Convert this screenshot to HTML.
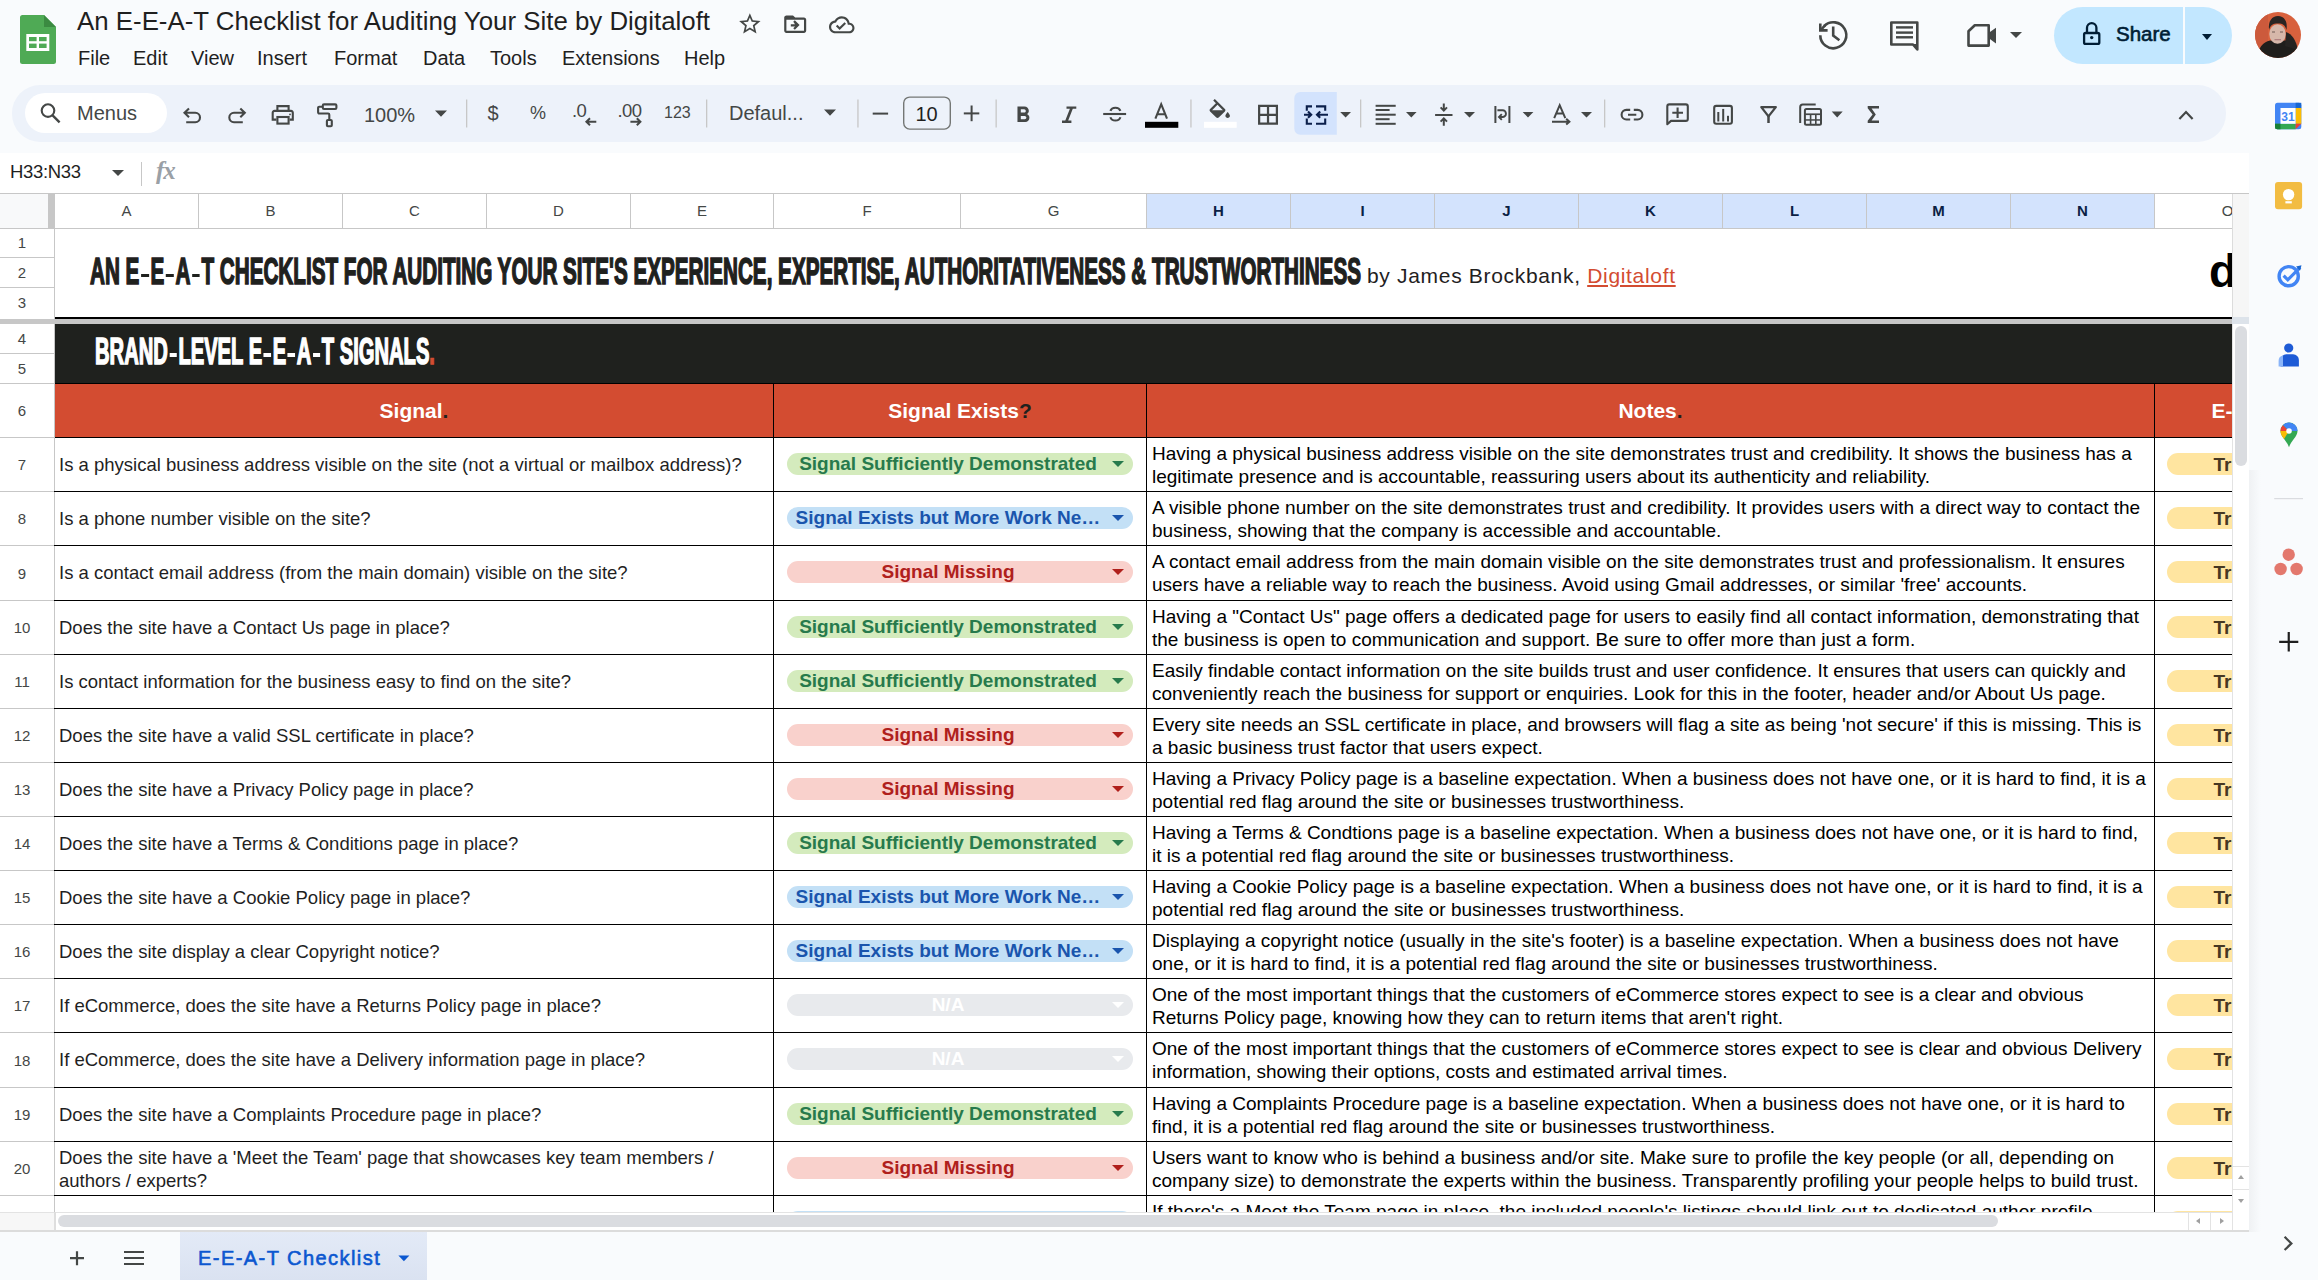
<!DOCTYPE html>
<html><head><meta charset="utf-8">
<style>
*{box-sizing:border-box;margin:0;padding:0}
html,body{width:2318px;height:1280px;overflow:hidden;background:#f9fbfd;font-family:"Liberation Sans",sans-serif;color:#1f1f1f}
.abs{position:absolute}
svg{position:absolute;overflow:visible}
#title{position:absolute;left:77px;top:7px;font-size:25.85px;color:#1f1f1f;white-space:nowrap}
.menu{position:absolute;top:47px;font-size:20px;color:#1f1f1f;white-space:nowrap}
#toolbar{position:absolute;left:12px;top:85px;width:2214px;height:57px;border-radius:28px;background:#edf2fa}
#search{position:absolute;left:25px;top:93px;width:142px;height:40px;border-radius:20px;background:#fff}
.tbt{position:absolute;white-space:nowrap;color:#444746}
.sep{position:absolute;top:100px;width:1px;height:27px;background:#c7c7c7}
.dd{position:absolute;width:0;height:0;border-left:6px solid transparent;border-right:6px solid transparent;border-top:6px solid #444746}
#fbar{position:absolute;left:0;top:153px;width:2249px;height:40px;background:#fff}
#grid{position:absolute;left:0;top:193px;width:2249px;height:1039px;background:#fff;overflow:hidden}
.ch{position:absolute;top:194px;height:34px;line-height:34px;text-align:center;font-size:15px;color:#444746}
.ch.sel{color:#0b1f44;font-weight:bold}
.rn{position:absolute;left:0;width:44px;text-align:center;font-size:15px;color:#444746;display:flex;align-items:center;justify-content:center}
.q{position:absolute;left:59px;font-size:18.5px;line-height:22.6px;color:#1f1f1f;white-space:nowrap}
.nt{position:absolute;left:1152px;font-size:19px;line-height:22.6px;color:#000;white-space:nowrap}
.pill{position:absolute;left:787px;width:346px;height:22px;border-radius:11px;font-weight:bold;font-size:19px;line-height:22px;text-align:center;white-space:nowrap}
.pill span{position:absolute;left:0;right:24px;top:0;text-align:center}
.pill i{position:absolute;right:9px;top:8px;width:0;height:0;border-left:6.5px solid transparent;border-right:6.5px solid transparent;border-top:6px solid}
.tp{position:absolute;left:2167px;width:120px;height:22px;border-radius:11px;background:#ffe5a0;color:#473822;font-weight:bold;font-size:19px;line-height:22px}
.tp span{position:absolute;left:46.5px;top:0.5px}
.hl{position:absolute;left:54px;width:2180px;height:1px;background:#000}
.vl{position:absolute;width:1px;background:#000}
.gl{position:absolute;background:#c7c7c7}
.hy{display:inline-block;width:13.6px;height:3.5px;background:currentColor;margin:0 2.9px;vertical-align:7px}
</style></head><body>

<!-- ===== HEADER ===== -->
<svg style="left:20px;top:15px" width="36" height="49" viewBox="0 0 36 49">
  <path d="M2.5 0 H24 L36 12 V46.5 a2.5 2.5 0 0 1 -2.5 2.5 H2.5 a2.5 2.5 0 0 1 -2.5 -2.5 V2.5 a2.5 2.5 0 0 1 2.5 -2.5z" fill="#4faa55"/>
  <path d="M24 0 L36 12 H24z" fill="#3b8a41"/>
  <rect x="6.3" y="19" width="23" height="17" fill="#fff"/>
  <rect x="9" y="22" width="7.6" height="4.2" fill="#4faa55"/><rect x="19" y="22" width="7.6" height="4.2" fill="#4faa55"/>
  <rect x="9" y="28.6" width="7.6" height="4.4" fill="#4faa55"/><rect x="19" y="28.6" width="7.6" height="4.4" fill="#4faa55"/>
</svg>
<div id="title">An E-E-A-T Checklist for Auditing Your Site by Digitaloft</div>

<div class="menu" style="left:78px">File</div>
<div class="menu" style="left:133px">Edit</div>
<div class="menu" style="left:191px">View</div>
<div class="menu" style="left:257px">Insert</div>
<div class="menu" style="left:334px">Format</div>
<div class="menu" style="left:423px">Data</div>
<div class="menu" style="left:490px">Tools</div>
<div class="menu" style="left:562px">Extensions</div>
<div class="menu" style="left:684px">Help</div>

<!-- star -->
<svg style="left:737px;top:11px" width="25.7" height="25.7" viewBox="0 0 24 24"><path fill="#444746" d="M22 9.24l-7.19-.62L12 2 9.19 8.63 2 9.24l5.46 4.73L5.82 21 12 17.27 18.18 21l-1.63-7.03L22 9.24zM12 15.4l-3.76 2.27 1-4.28-3.32-2.88 4.38-.38L12 6.1l1.71 4.04 4.38.38-3.32 2.88 1 4.28L12 15.4z"/></svg>
<!-- folder move -->
<svg style="left:782px;top:11px" width="26.4" height="26.4" viewBox="0 0 24 24"><path fill="#444746" d="M20 6h-8l-2-2H4c-1.1 0-1.99.9-1.99 2L2 18c0 1.1.9 2 2 2h16c1.1 0 2-.9 2-2V8c0-1.1-.9-2-2-2zm0 12H4V8h16v10z"/><path fill="#444746" d="M11.84 12H8v2h3.84l-1.59 1.59L11.66 17 16 12.69 11.66 8.4l-1.41 1.41L11.84 12z"/></svg>
<!-- cloud done -->
<svg style="left:828.5px;top:11.8px" width="25.5" height="25.5" viewBox="0 0 24 24"><path fill="#444746" d="M19.35 10.04C18.67 6.59 15.64 4 12 4 9.11 4 6.6 5.64 5.35 8.04 2.34 8.36 0 10.91 0 14c0 3.31 2.69 6 6 6h13c2.76 0 5-2.24 5-5 0-2.64-2.05-4.78-4.65-4.96zM19 18H6c-2.21 0-4-1.79-4-4 0-2.05 1.53-3.76 3.56-3.97l1.07-.11.5-.95C8.080 7.14 9.94 6 12 6c2.62 0 4.88 1.86 5.39 4.43l.3 1.5 1.53.11c1.56.1 2.78 1.41 2.78 2.96 0 1.65-1.35 3-3 3zm-9-3.82l-2.09-2.09L6.5 13.5 10 17l6.01-6.01-1.41-1.41z"/></svg>

<!-- history -->
<svg style="left:1815px;top:17px" width="36" height="36" viewBox="0 0 36 36">
  <path d="M5.3 18.2 A13 13 0 1 0 9.2 9" fill="none" stroke="#444746" stroke-width="2.6"/>
  <path d="M5.3 6.4 V13.4 H12.6" fill="none" stroke="#444746" stroke-width="2.6"/>
  <path d="M6.2 12.6 L10 8.4" fill="none" stroke="#444746" stroke-width="2.6"/>
  <path d="M18.2 9.6 V18.6 L24.4 23.2" fill="none" stroke="#444746" stroke-width="2.6"/>
</svg>
<!-- comments -->
<svg style="left:1887px;top:18px" width="36" height="36" viewBox="0 0 36 36">
  <path d="M4.3 4.5 H30.3 V31.5 L26 26.5 H4.3z" fill="none" stroke="#444746" stroke-width="2.6" stroke-linejoin="round"/>
  <path d="M30.3 26 V31.6 L25.5 26z" fill="#444746"/>
  <rect x="9" y="8.2" width="17" height="2.4" fill="#444746"/>
  <rect x="9" y="13.4" width="17" height="2.4" fill="#444746"/>
  <rect x="9" y="18.1" width="17" height="2.4" fill="#444746"/>
</svg>
<!-- camera -->
<svg style="left:1964px;top:17px" width="40" height="36" viewBox="0 0 40 36">
  <path d="M4.5 14.3 L10.8 8.3 H24.7 V28.6 H4.5z" fill="none" stroke="#444746" stroke-width="2.6" stroke-linejoin="round"/>
  <path d="M24.5 16 L32 10.7 V26.5 L24.5 21z" fill="#444746"/>
</svg>
<div class="dd" style="left:2010px;top:32px;border-top-color:#444746;border-left-width:6px;border-right-width:6px"></div>

<!-- share button -->
<div class="abs" style="left:2054px;top:6.5px;width:178px;height:57px;border-radius:28.5px;background:#c2e7ff"></div>
<div class="abs" style="left:2183px;top:6.5px;width:2px;height:57px;background:#f9fbfd"></div>
<svg style="left:2080px;top:20px" width="24" height="28" viewBox="0 0 24 28">
  <rect x="4.1" y="13" width="15.2" height="10.9" rx="1.5" fill="none" stroke="#001d35" stroke-width="2.3"/>
  <path d="M7 13 V7.8 A4.7 4.7 0 0 1 16.4 7.8 V13" fill="none" stroke="#001d35" stroke-width="2.3"/>
  <circle cx="11.7" cy="17.6" r="1.7" fill="#001d35"/>
</svg>
<div class="abs" style="left:2116px;top:21.5px;font-size:20.5px;-webkit-text-stroke:0.6px #001d35;color:#001d35">Share</div>
<div class="dd" style="left:2201.5px;top:33.5px;border-top-color:#001d35;border-left-width:5.5px;border-right-width:5.5px;border-top-width:6px"></div>

<!-- avatar -->
<svg style="left:2254.5px;top:12px" width="46" height="46" viewBox="0 0 46 46">
  <defs><clipPath id="avc"><circle cx="23" cy="23" r="23"/></clipPath></defs>
  <g clip-path="url(#avc)">
    <rect width="46" height="46" fill="#d8613d"/>
    <rect x="0" y="0" width="13" height="46" fill="#cc5a3c"/>
    <path d="M2 46 C3 36 8 30 15 28.5 L31 28.5 C38 30 43 36 44 46z" fill="#1f1e1c"/>
    <path d="M31 20 C37 22 41 28 43 38 L30 34z" fill="#262422"/>
    <ellipse cx="22.5" cy="22" rx="8.2" ry="9.8" fill="#d6b7aa"/>
    <path d="M14 18 C13 9 17 4 23 4 C29 4 33 9 31.5 18 C30 13 28 11.5 23 11.5 C17.5 11.5 15.5 13 14 18z" fill="#2a2422"/>
    <path d="M17 20 H20 M25 20 H28" stroke="#6e5a55" stroke-width="1"/>
    <rect x="19.5" y="27" width="6.5" height="1.3" fill="#b08080"/>
  </g>
</svg>


<!-- ===== TOOLBAR ===== -->
<div id="toolbar"></div>
<div id="search"></div>
<!-- search icon + Menus -->
<svg style="left:0;top:0" width="2318" height="160" viewBox="0 0 2318 160">
 <g fill="none" stroke="#444746" stroke-width="2.1">
  <circle cx="48" cy="110.6" r="6.3"/>
  <path d="M52.6 115.4 L59.6 122.4" stroke-width="2.4"/>
  <!-- undo -->
  <path d="M189 108.4 L184.5 112.8 L189 117.2 M184.5 112.8 H195.3 A4.7 4.7 0 0 1 195.3 122.2 H186.2"/>
  <!-- redo -->
  <path d="M240.3 108.4 L244.8 112.8 L240.3 117.2 M244.8 112.8 H234 A4.7 4.7 0 0 0 234 122.2 H242.8"/>
  <!-- print -->
  <path d="M277.4 110.8 V106.1 H288.6 V110.8"/>
  <path d="M276.4 119.6 H272.7 V112.8 A1.8 1.8 0 0 1 274.5 110.9 H291 A1.8 1.8 0 0 1 292.8 112.8 V119.6 H289.6"/>
  <rect x="277.4" y="117" width="11.2" height="6.6"/>
  <!-- paint format -->
  <rect x="322.8" y="104.4" width="13.6" height="4.6" rx="1.2"/>
  <path d="M322.8 106.7 H319.3 A1.2 1.2 0 0 0 318.1 107.9 V112.3 A1.2 1.2 0 0 0 319.3 113.5 H328.1 A1.2 1.2 0 0 1 329.3 114.7 V119.6"/>
  <rect x="326.9" y="120" width="4.9" height="6.3" rx="1"/>
 </g>
 <circle cx="290" cy="114.4" r="0.9" fill="#444746"/>
 <!-- dropdown triangles -->
 <path d="M435 110.6 H447 L441 116.8z M824 109.6 H836 L830 115.8z M1340.2 112 H1351 L1345.6 117.6z M1406 112 H1416.6 L1411.3 117.6z M1464 112 H1475 L1469.5 117.6z M1522.7 112 H1533.4 L1528 117.6z M1581 112 H1592 L1586.5 117.6z M1831.7 111.6 H1842.7 L1837.2 117.6z" fill="#444746"/>
 <!-- separators -->
 <g fill="#c7c7c7"><rect x="466" y="99.5" width="1.3" height="28"/><rect x="706" y="99.5" width="1.3" height="28"/><rect x="857.3" y="99.5" width="1.3" height="28"/><rect x="995.5" y="99.5" width="1.3" height="28"/><rect x="1190.3" y="99.5" width="1.3" height="28"/><rect x="1360" y="99.5" width="1.3" height="28"/><rect x="1604" y="99.5" width="1.3" height="28"/></g>

 <!-- arrows for decimal icons -->
 <g fill="none" stroke="#444746" stroke-width="2">
  <path d="M596.3 121.8 H586.5 M590 118.3 L586.4 121.8 L590 125.3"/>
  <path d="M630.4 121.8 H640.3 M636.8 118.3 L640.4 121.8 L636.8 125.3"/>
 </g>
 <!-- minus / plus -->
 <rect x="872.7" y="112.6" width="15.4" height="2" fill="#444746"/>
 <rect x="963.8" y="112.4" width="15.5" height="2" fill="#444746"/>
 <rect x="970.6" y="105.5" width="2" height="15.7" fill="#444746"/>
 <rect x="903.7" y="97.1" width="46.6" height="32" rx="6" fill="none" stroke="#747775" stroke-width="1.4"/>

 <!-- bold -->
 <path transform="translate(1009.7 102) scale(1.11)" fill="#444746" d="M15.6 10.79c.97-.67 1.65-1.77 1.65-2.79 0-2.26-1.75-4-4-4H7v14h7.04c2.09 0 3.71-1.7 3.71-3.79 0-1.52-.86-2.82-2.15-3.42zM10 6.5h3c.83 0 1.5.67 1.5 1.5s-.67 1.5-1.5 1.5h-3v-3zm3.5 9H10v-3h3.5c.83 0 1.5.67 1.5 1.5s-.67 1.5-1.5 1.5z"/>
 <!-- italic -->
 <path fill="#444746" d="M1066.5 106.4 H1076.3 V108.8 H1072.8 L1068.2 120.6 H1071.4 V123 H1062 V120.6 H1065.3 L1069.9 108.8 H1066.5z"/>
 <!-- strikethrough -->
 <g fill="none" stroke="#444746" stroke-width="2.1">
  <path d="M1103.2 114 H1126.1"/>
  <path d="M1110.4 110.8 A5.2 4.3 0 0 1 1120.4 110.8"/>
  <path d="M1110.4 117.2 A5.2 4.6 0 0 0 1120.4 117.2"/>
  <!-- text color A -->
  <path d="M1155.4 118.6 L1161.2 104.2 L1167 118.6 M1157.4 114.2 H1165"/>
 </g>
 <rect x="1145" y="121.8" width="33.3" height="6" fill="#000"/>
 <!-- fill bucket -->
 <path transform="translate(1206.2 98.9) scale(1.13)" fill="#444746" d="M16.56 8.94L7.62 0 6.21 1.41l2.38 2.38-5.15 5.15c-.59.59-.59 1.54 0 2.12l5.5 5.5c.29.29.68.44 1.06.44s.77-.15 1.06-.44l5.5-5.5c.59-.58.59-1.53 0-2.12zM5.210 10L10 5.21 14.79 10H5.21zM19 11.5s-2 2.17-2 3.5c0 1.1.9 2 2 2s2-.9 2-2c0-1.33-2-3.5-2-3.5z"/>
 <rect x="1204" y="121.8" width="32.7" height="6" fill="#fff"/>
 <!-- borders -->
 <path transform="translate(1254.7 101.5) scale(1.11)" fill="#444746" d="M3 3v18h18V3H3zm8 16H5v-6h6v6zm0-8H5V5h6v6zm8 8h-6v-6h6v6zm0-8h-6V5h6v6z"/>
 <!-- merge highlight -->
 <path d="M1300.3 92 H1336.8 V134.8 H1300.3 A6 6 0 0 1 1294.3 128.8 V98 A6 6 0 0 1 1300.3 92z" fill="#d3e3fd"/>
 <g fill="none" stroke="#0b1f4b" stroke-width="2.1">
  <path d="M1312 106.4 H1306.8 V110.8 M1306.8 118.6 V123.8 H1312"/>
  <path d="M1316 106.4 H1325.2 V110.8 M1325.2 118.6 V123.8 H1316"/>
  <path d="M1304 114.7 H1311 M1308 111.6 L1311.2 114.7 L1308 117.8"/>
  <path d="M1328 114.7 H1317 M1320.2 111.6 L1317 114.7 L1320.2 117.8"/>
 </g>
 <!-- align left -->
 <g fill="#444746">
  <rect x="1375.6" y="104.8" width="20.1" height="2"/>
  <rect x="1375.6" y="109" width="14" height="2"/>
  <rect x="1375.6" y="113.7" width="20.1" height="2"/>
  <rect x="1375.6" y="118.2" width="14" height="2"/>
  <rect x="1375.6" y="122.8" width="20.1" height="2"/>
 </g>
 <!-- valign -->
 <g fill="none" stroke="#444746" stroke-width="2">
  <path d="M1435.1 115 H1452.5"/>
  <path d="M1443.8 103.4 V110.4 M1440.6 107.4 L1443.8 110.6 L1447 107.4"/>
  <path d="M1443.8 125.7 V118.6 M1440.6 121.6 L1443.8 118.4 L1447 121.6"/>
  <!-- wrap -->
  <path d="M1495.4 106 V123 M1509.4 106 V123"/>
  <path d="M1497.4 110.3 H1502.6 A3.35 3.35 0 0 1 1502.6 117 H1499 M1501.8 114.2 L1499 117 L1501.8 119.8" stroke-width="1.9"/>
  <!-- rotate A -->
  <path d="M1554.2 118.2 L1559.7 105.2 L1565.3 118.2 M1556.3 113.5 H1563.1"/>
  <path d="M1552 121.7 H1569 M1566.2 118.8 L1569.4 121.7 L1566.2 124.6"/>
  <!-- link -->
  <path d="M1630.2 109.9 H1626.4 A4.8 4.8 0 0 0 1626.4 119.5 H1630.2 M1633.8 109.9 H1637.6 A4.8 4.8 0 0 1 1637.6 119.5 H1633.8 M1628 114.7 H1636.3" stroke-width="2.1"/>
  <!-- comment + -->
  <path d="M1667.3 124.2 V106.4 A2 2 0 0 1 1669.3 104.4 H1685.8 A2 2 0 0 1 1687.8 106.4 V118.9 A2 2 0 0 1 1685.8 120.9 H1671z" stroke-width="2.1" stroke-linejoin="round"/>
  <path d="M1672.3 112.7 H1683 M1677.6 107.4 V118" stroke-width="2.1"/>
  <!-- chart -->
  <rect x="1714.2" y="105.9" width="17.7" height="17.9" rx="2" stroke-width="2.1"/>
  <!-- filter -->
  <path d="M1761.3 107.1 H1775.8 L1768.5 116.4z" stroke-width="2.3" stroke-linejoin="round"/>
  <path d="M1768.5 116 V123" stroke-width="2.5"/>
  <!-- table -->
  <path d="M1800.2 123 V107 A2.5 2.5 0 0 1 1802.7 104.5 H1815.7" stroke-width="2"/>
  <rect x="1804.9" y="109" width="16.1" height="15.8" rx="1.5" stroke-width="2"/>
 </g>
 <g fill="#444746">
  <rect x="1717.3" y="112" width="2" height="9.5"/><rect x="1722.2" y="108.9" width="2" height="12.6"/><rect x="1727" y="115.8" width="2" height="5.7"/>
  <rect x="1804.9" y="113.4" width="16.1" height="1.7"/>
  <rect x="1809.8" y="115" width="1.6" height="10"/><rect x="1815" y="115" width="1.6" height="10"/>
  <rect x="1804.9" y="119.2" width="16.1" height="1.5"/>
  <!-- sigma -->
  <path d="M1867.7 106.1 H1879 V108.6 H1871.6 L1875.8 114.5 L1871.6 120.5 H1879 V123 H1867.7 V120.8 L1872.6 114.5 L1867.7 108.3z"/>
 </g>
 <!-- chevron up -->
 <path d="M2179.4 119 L2186 112 L2192.6 119" fill="none" stroke="#444746" stroke-width="2.2"/>
</svg>
<div class="tbt" style="left:77px;top:102px;font-size:20px">Menus</div>
<div class="tbt" style="left:364px;top:104px;font-size:20px">100%</div>
<div class="tbt" style="left:487.5px;top:102px;font-size:20px">$</div>
<div class="tbt" style="left:530px;top:103px;font-size:18px">%</div>
<div class="tbt" style="left:572px;top:99.5px;font-size:18.5px;letter-spacing:-0.6px">.0</div>
<div class="tbt" style="left:617.5px;top:99.5px;font-size:18.5px;letter-spacing:-0.6px">.00</div>
<div class="tbt" style="left:664px;top:104px;font-size:16px">123</div>
<div class="tbt" style="left:729px;top:102px;font-size:20px">Defaul...</div>
<div class="tbt" style="left:915.5px;top:102.5px;font-size:20px;color:#1f1f1f">10</div>


<!-- ===== FORMULA BAR ===== -->
<div id="fbar"></div>
<div class="abs" style="left:10px;top:161px;font-size:18.5px;letter-spacing:-0.35px;color:#1f1f1f">H33:N33</div>
<div class="dd" style="left:112px;top:170px;border-top-color:#444746"></div>
<div class="abs" style="left:141px;top:162px;width:1px;height:24px;background:#c7c7c7"></div>
<div class="abs" style="left:156px;top:157px;font-family:'Liberation Serif',serif;font-style:italic;font-weight:bold;font-size:25px;letter-spacing:-1px;color:#9aa0a6">fx</div>

<!-- ===== GRID ===== -->
<div id="grid">
  <!-- coordinates inside grid are offset by top:193 -->
  <div style="position:absolute;left:0;top:0;width:2249px;height:1037px;transform:translateY(-193px)">
    <!-- top line of column header -->
    <div class="gl" style="left:0;top:193px;width:2249px;height:1px"></div>
    <div class="abs" style="left:0;top:194px;width:48px;height:34px;background:#f8f9fa"></div>
    <div class="abs" style="left:48px;top:194px;width:7px;height:34px;background:#c7c7c7"></div>
<div class="ch" style="left:55px;width:143px">A</div>
<div class="ch" style="left:199px;width:143px">B</div>
<div class="ch" style="left:343px;width:143px">C</div>
<div class="ch" style="left:487px;width:143px">D</div>
<div class="ch" style="left:631px;width:142px">E</div>
<div class="ch" style="left:774px;width:186px">F</div>
<div class="ch" style="left:961px;width:185px">G</div>
<div class="abs" style="left:1147px;top:194px;width:143px;height:34px;background:#d3e3fd"></div>
<div class="ch sel" style="left:1147px;width:143px">H</div>
<div class="abs" style="left:1291px;top:194px;width:143px;height:34px;background:#d3e3fd"></div>
<div class="ch sel" style="left:1291px;width:143px">I</div>
<div class="abs" style="left:1435px;top:194px;width:143px;height:34px;background:#d3e3fd"></div>
<div class="ch sel" style="left:1435px;width:143px">J</div>
<div class="abs" style="left:1579px;top:194px;width:143px;height:34px;background:#d3e3fd"></div>
<div class="ch sel" style="left:1579px;width:143px">K</div>
<div class="abs" style="left:1723px;top:194px;width:143px;height:34px;background:#d3e3fd"></div>
<div class="ch sel" style="left:1723px;width:143px">L</div>
<div class="abs" style="left:1867px;top:194px;width:143px;height:34px;background:#d3e3fd"></div>
<div class="ch sel" style="left:1867px;width:143px">M</div>
<div class="abs" style="left:2011px;top:194px;width:143px;height:34px;background:#d3e3fd"></div>
<div class="ch sel" style="left:2011px;width:143px">N</div>
<div class="ch" style="left:2155px;width:145px;text-align:center">O</div>
<div class="gl" style="left:198px;top:194px;width:1px;height:34px"></div>
<div class="gl" style="left:342px;top:194px;width:1px;height:34px"></div>
<div class="gl" style="left:486px;top:194px;width:1px;height:34px"></div>
<div class="gl" style="left:630px;top:194px;width:1px;height:34px"></div>
<div class="gl" style="left:773px;top:194px;width:1px;height:34px"></div>
<div class="gl" style="left:960px;top:194px;width:1px;height:34px"></div>
<div class="gl" style="left:1146px;top:194px;width:1px;height:34px"></div>
<div class="gl" style="left:1290px;top:194px;width:1px;height:34px"></div>
<div class="gl" style="left:1434px;top:194px;width:1px;height:34px"></div>
<div class="gl" style="left:1578px;top:194px;width:1px;height:34px"></div>
<div class="gl" style="left:1722px;top:194px;width:1px;height:34px"></div>
<div class="gl" style="left:1866px;top:194px;width:1px;height:34px"></div>
<div class="gl" style="left:2010px;top:194px;width:1px;height:34px"></div>
<div class="gl" style="left:2154px;top:194px;width:1px;height:34px"></div>
<div class="gl" style="left:2232px;top:194px;width:1px;height:34px"></div>
    <div class="gl" style="left:0;top:228px;width:2232px;height:1px"></div>

    <!-- row header vertical line -->
    <div class="gl" style="left:54px;top:227px;width:1px;height:1003px"></div>

    <!-- rows 1-3 -->
    <div class="rn" style="top:228px;height:29px">1</div>
    <div class="gl" style="left:0;top:257px;width:54px;height:1px"></div>
    <div class="rn" style="top:258px;height:29px">2</div>
    <div class="gl" style="left:0;top:287px;width:54px;height:1px"></div>
    <div class="rn" style="top:288px;height:29px">3</div>

    <!-- big title -->
    <div class="abs" id="bigtitle" style="left:90px;top:251px;white-space:nowrap;font-weight:bold;font-size:36px;color:#1f211e;-webkit-text-stroke:1.6px #1f211e;transform-origin:0 0;transform:scaleX(0.5740)">AN E<i class="hy"></i>E<i class="hy"></i>A<i class="hy"></i>T CHECKLIST FOR AUDITING YOUR SITE'S EXPERIENCE, EXPERTISE, AUTHORITATIVENESS &amp; TRUSTWORTHINESS</div>
    <div class="abs" style="left:1367px;top:264px;white-space:nowrap;font-size:21px;letter-spacing:0.68px;color:#1f211e">by James Brockbank, <span style="color:#d34c31;text-decoration:underline">Digitaloft</span></div>
    <div class="abs" style="left:2209px;top:248px;font-weight:bold;font-size:46px;color:#000;line-height:46px">d</div>

    <!-- frozen separator -->
    <div class="abs" style="left:55px;top:317px;width:2177px;height:2px;background:#000"></div>
    <div class="gl" style="left:0;top:319px;width:2232px;height:5px"></div>

    <!-- rows 4-5 dark band -->
    <div class="abs" style="left:55px;top:324px;width:2177px;height:59px;background:#1f211e"></div>
    <div class="rn" style="top:324px;height:29px">4</div>
    <div class="gl" style="left:0;top:353px;width:54px;height:1px"></div>
    <div class="rn" style="top:354px;height:29px">5</div>
    <div class="abs" id="bandtitle" style="left:95px;top:330.5px;white-space:nowrap;font-weight:bold;font-size:37px;color:#fff;-webkit-text-stroke:1.6px #fff;transform-origin:0 0;transform:scaleX(0.5451)">BRAND<i class="hy"></i>LEVEL E<i class="hy"></i>E<i class="hy"></i>A<i class="hy"></i>T SIGNALS<span style="color:#d34c31;-webkit-text-stroke:1.6px #d34c31">.</span></div>
    <div class="gl" style="left:0;top:383px;width:54px;height:1px"></div>

    <!-- row 6 red header -->
    <div class="abs" style="left:55px;top:383px;width:2177px;height:1px;background:#000"></div>
    <div class="abs" style="left:55px;top:384px;width:2177px;height:53px;background:#d34c31"></div>
    <div class="rn" style="top:384px;height:53px">6</div>
    <div class="gl" style="left:0;top:437px;width:54px;height:1px"></div>
    <div class="abs hdr" style="left:55px;width:718px;top:399px;text-align:center;font-weight:bold;font-size:21px;color:#fff">Signal<span style="color:#1f211e">.</span></div>
    <div class="abs hdr" style="left:774px;width:372px;top:399px;text-align:center;font-weight:bold;font-size:21px;color:#fff">Signal Exists<span style="color:#1f211e">?</span></div>
    <div class="abs hdr" style="left:1147px;width:1007px;top:399px;text-align:center;font-weight:bold;font-size:21px;color:#fff">Notes<span style="color:#1f211e">.</span></div>
    <div class="abs hdr" style="left:2211.5px;top:399px;font-weight:bold;font-size:21px;color:#fff">E-</div>
    <div class="abs" style="left:55px;top:437px;width:2177px;height:1px;background:#000"></div>

<div class="rn" style="top:438px;height:53px">7</div>
<div class="q" style="top:454px">Is a physical business address visible on the site (not a virtual or mailbox address)?</div>
<div class="pill" style="top:453px;background:#d4ebbd;color:#277a4c"><span>Signal Sufficiently Demonstrated</span><i style="border-top-color:#277a4c"></i></div>
<div class="nt" style="top:443px">Having a physical business address visible on the site demonstrates trust and credibility. It shows the business has a<br>legitimate presence and is accountable, reassuring users about its authenticity and reliability.</div>
<div class="tp" style="top:453px"><span>Tr</span></div>
<div class="hl" style="top:491px"></div>
<div class="gl" style="left:0;top:491px;width:54px;height:1px"></div>
<div class="rn" style="top:492px;height:53px">8</div>
<div class="q" style="top:508px">Is a phone number visible on the site?</div>
<div class="pill" style="top:507px;background:#c3e0f6;color:#1a55ad"><span>Signal Exists but More Work Ne…</span><i style="border-top-color:#1a55ad"></i></div>
<div class="nt" style="top:497px">A visible phone number on the site demonstrates trust and credibility. It provides users with a direct way to contact the<br>business, showing that the company is accessible and accountable.</div>
<div class="tp" style="top:507px"><span>Tr</span></div>
<div class="hl" style="top:545px"></div>
<div class="gl" style="left:0;top:545px;width:54px;height:1px"></div>
<div class="rn" style="top:546px;height:54px">9</div>
<div class="q" style="top:562px">Is a contact email address (from the main domain) visible on the site?</div>
<div class="pill" style="top:561px;background:#f9d1cc;color:#b0201c"><span>Signal Missing</span><i style="border-top-color:#b0201c"></i></div>
<div class="nt" style="top:551px">A contact email address from the main domain visible on the site demonstrates trust and professionalism. It ensures<br>users have a reliable way to reach the business. Avoid using Gmail addresses, or similar &#x27;free&#x27; accounts.</div>
<div class="tp" style="top:561px"><span>Tr</span></div>
<div class="hl" style="top:600px"></div>
<div class="gl" style="left:0;top:600px;width:54px;height:1px"></div>
<div class="rn" style="top:601px;height:53px">10</div>
<div class="q" style="top:617px">Does the site have a Contact Us page in place?</div>
<div class="pill" style="top:616px;background:#d4ebbd;color:#277a4c"><span>Signal Sufficiently Demonstrated</span><i style="border-top-color:#277a4c"></i></div>
<div class="nt" style="top:606px">Having a &quot;Contact Us&quot; page offers a dedicated page for users to easily find all contact information, demonstrating that<br>the business is open to communication and support. Be sure to offer more than just a form.</div>
<div class="tp" style="top:616px"><span>Tr</span></div>
<div class="hl" style="top:654px"></div>
<div class="gl" style="left:0;top:654px;width:54px;height:1px"></div>
<div class="rn" style="top:655px;height:53px">11</div>
<div class="q" style="top:671px">Is contact information for the business easy to find on the site?</div>
<div class="pill" style="top:670px;background:#d4ebbd;color:#277a4c"><span>Signal Sufficiently Demonstrated</span><i style="border-top-color:#277a4c"></i></div>
<div class="nt" style="top:660px">Easily findable contact information on the site builds trust and user confidence. It ensures that users can quickly and<br>conveniently reach the business for support or enquiries. Look for this in the footer, header and/or About Us page.</div>
<div class="tp" style="top:670px"><span>Tr</span></div>
<div class="hl" style="top:708px"></div>
<div class="gl" style="left:0;top:708px;width:54px;height:1px"></div>
<div class="rn" style="top:709px;height:53px">12</div>
<div class="q" style="top:725px">Does the site have a valid SSL certificate in place?</div>
<div class="pill" style="top:724px;background:#f9d1cc;color:#b0201c"><span>Signal Missing</span><i style="border-top-color:#b0201c"></i></div>
<div class="nt" style="top:714px">Every site needs an SSL certificate in place, and browsers will flag a site as being &#x27;not secure&#x27; if this is missing. This is<br>a basic business trust factor that users expect.</div>
<div class="tp" style="top:724px"><span>Tr</span></div>
<div class="hl" style="top:762px"></div>
<div class="gl" style="left:0;top:762px;width:54px;height:1px"></div>
<div class="rn" style="top:763px;height:53px">13</div>
<div class="q" style="top:779px">Does the site have a Privacy Policy page in place?</div>
<div class="pill" style="top:778px;background:#f9d1cc;color:#b0201c"><span>Signal Missing</span><i style="border-top-color:#b0201c"></i></div>
<div class="nt" style="top:768px">Having a Privacy Policy page is a baseline expectation. When a business does not have one, or it is hard to find, it is a<br>potential red flag around the site or businesses trustworthiness.</div>
<div class="tp" style="top:778px"><span>Tr</span></div>
<div class="hl" style="top:816px"></div>
<div class="gl" style="left:0;top:816px;width:54px;height:1px"></div>
<div class="rn" style="top:817px;height:53px">14</div>
<div class="q" style="top:833px">Does the site have a Terms &amp; Conditions page in place?</div>
<div class="pill" style="top:832px;background:#d4ebbd;color:#277a4c"><span>Signal Sufficiently Demonstrated</span><i style="border-top-color:#277a4c"></i></div>
<div class="nt" style="top:822px">Having a Terms &amp; Condtions page is a baseline expectation. When a business does not have one, or it is hard to find,<br>it is a potential red flag around the site or businesses trustworthiness.</div>
<div class="tp" style="top:832px"><span>Tr</span></div>
<div class="hl" style="top:870px"></div>
<div class="gl" style="left:0;top:870px;width:54px;height:1px"></div>
<div class="rn" style="top:871px;height:53px">15</div>
<div class="q" style="top:887px">Does the site have a Cookie Policy page in place?</div>
<div class="pill" style="top:886px;background:#c3e0f6;color:#1a55ad"><span>Signal Exists but More Work Ne…</span><i style="border-top-color:#1a55ad"></i></div>
<div class="nt" style="top:876px">Having a Cookie Policy page is a baseline expectation. When a business does not have one, or it is hard to find, it is a<br>potential red flag around the site or businesses trustworthiness.</div>
<div class="tp" style="top:886px"><span>Tr</span></div>
<div class="hl" style="top:924px"></div>
<div class="gl" style="left:0;top:924px;width:54px;height:1px"></div>
<div class="rn" style="top:925px;height:53px">16</div>
<div class="q" style="top:941px">Does the site display a clear Copyright notice?</div>
<div class="pill" style="top:940px;background:#c3e0f6;color:#1a55ad"><span>Signal Exists but More Work Ne…</span><i style="border-top-color:#1a55ad"></i></div>
<div class="nt" style="top:930px">Displaying a copyright notice (usually in the site&#x27;s footer) is a baseline expectation. When a business does not have<br>one, or it is hard to find, it is a potential red flag around the site or businesses trustworthiness.</div>
<div class="tp" style="top:940px"><span>Tr</span></div>
<div class="hl" style="top:978px"></div>
<div class="gl" style="left:0;top:978px;width:54px;height:1px"></div>
<div class="rn" style="top:979px;height:53px">17</div>
<div class="q" style="top:995px">If eCommerce, does the site have a Returns Policy page in place?</div>
<div class="pill" style="top:994px;background:#e8eaed;color:#ffffff"><span>N/A</span><i style="border-top-color:#ffffff"></i></div>
<div class="nt" style="top:984px">One of the most important things that the customers of eCommerce stores expect to see is a clear and obvious<br>Returns Policy page, knowing how they can to return items that aren&#x27;t right.</div>
<div class="tp" style="top:994px"><span>Tr</span></div>
<div class="hl" style="top:1032px"></div>
<div class="gl" style="left:0;top:1032px;width:54px;height:1px"></div>
<div class="rn" style="top:1033px;height:54px">18</div>
<div class="q" style="top:1049px">If eCommerce, does the site have a Delivery information page in place?</div>
<div class="pill" style="top:1048px;background:#e8eaed;color:#ffffff"><span>N/A</span><i style="border-top-color:#ffffff"></i></div>
<div class="nt" style="top:1038px">One of the most important things that the customers of eCommerce stores expect to see is clear and obvious Delivery<br>information, showing their options, costs and estimated arrival times.</div>
<div class="tp" style="top:1048px"><span>Tr</span></div>
<div class="hl" style="top:1087px"></div>
<div class="gl" style="left:0;top:1087px;width:54px;height:1px"></div>
<div class="rn" style="top:1088px;height:53px">19</div>
<div class="q" style="top:1104px">Does the site have a Complaints Procedure page in place?</div>
<div class="pill" style="top:1103px;background:#d4ebbd;color:#277a4c"><span>Signal Sufficiently Demonstrated</span><i style="border-top-color:#277a4c"></i></div>
<div class="nt" style="top:1093px">Having a Complaints Procedure page is a baseline expectation. When a business does not have one, or it is hard to<br>find, it is a potential red flag around the site or businesses trustworthiness.</div>
<div class="tp" style="top:1103px"><span>Tr</span></div>
<div class="hl" style="top:1141px"></div>
<div class="gl" style="left:0;top:1141px;width:54px;height:1px"></div>
<div class="rn" style="top:1142px;height:53px">20</div>
<div class="q" style="top:1147px">Does the site have a &#x27;Meet the Team&#x27; page that showcases key team members /<br>authors / experts?</div>
<div class="pill" style="top:1157px;background:#f9d1cc;color:#b0201c"><span>Signal Missing</span><i style="border-top-color:#b0201c"></i></div>
<div class="nt" style="top:1147px">Users want to know who is behind a business and/or site. Make sure to profile the key people (or all, depending on<br>company size) to demonstrate the experts within the business. Transparently profiling your people helps to build trust.</div>
<div class="tp" style="top:1157px"><span>Tr</span></div>
<div class="hl" style="top:1195px"></div>
<div class="gl" style="left:0;top:1195px;width:54px;height:1px"></div>
<div class="rn" style="top:1196px;height:53px">21</div>
<div class="pill" style="top:1211px;background:#c3e0f6;color:#1a55ad"><span>Signal Exists but More Work Ne…</span><i style="border-top-color:#1a55ad"></i></div>
<div class="nt" style="top:1201px">If there&#x27;s a Meet the Team page in place, the included people&#x27;s listings should link out to dedicated author profile<br>pages.</div>
<div class="tp" style="top:1211px"><span>Tr</span></div>
<div class="hl" style="top:1249px"></div>
<div class="gl" style="left:0;top:1249px;width:54px;height:1px"></div>

    <!-- vertical black lines -->
    <div class="vl" style="left:773px;top:383px;height:830px"></div>
    <div class="vl" style="left:1146px;top:383px;height:830px"></div>
    <div class="vl" style="left:2154px;top:383px;height:830px"></div>

    <!-- bottom grid edge / horizontal scrollbar -->
    <div class="abs" style="left:0;top:1212px;width:2249px;height:18px;background:#fff"></div>
    <div class="gl" style="left:0;top:1212px;width:2232px;height:1px;background:#e3e3e3"></div>
    <div class="abs" style="left:0;top:1213px;width:54px;height:17px;background:#f7f7f7"></div>
    <div class="gl" style="left:54px;top:1212px;width:1.5px;height:18px;background:#dedede"></div>
    <div class="abs" style="left:58px;top:1215px;width:1940px;height:12px;border-radius:6px;background:#dadce0"></div>
    <div class="gl" style="left:0;top:1230px;width:2249px;height:1.5px;background:#dcdcdc"></div>

    <!-- vertical scrollbar track -->
    <div class="abs" style="left:2232px;top:194px;width:17px;height:123px;background:#f6f6f6;border-left:1px solid #dcdcdc"></div>
    <div class="abs" style="left:2232px;top:317px;width:17px;height:7px;background:#dde3ea"></div>
    <div class="abs" style="left:2232px;top:324px;width:17px;height:888px;background:#fff;border-left:1px solid #e3e3e3"></div>
    <div class="abs" style="left:2234.5px;top:326px;width:12.3px;height:140px;border-radius:6px;background:#dadce0"></div>
    <!-- scroll arrows -->
    <div class="abs" style="left:2233px;top:1166px;width:16px;height:46px;background:#fff;border-top:1px solid #e3e3e3"></div>
    <div class="abs" style="left:2233px;top:1189px;width:16px;height:1px;background:#e3e3e3"></div>
    <div class="abs" style="left:2237.5px;top:1174.5px;width:0;height:0;border-left:3.5px solid transparent;border-right:3.5px solid transparent;border-bottom:4px solid #a0a0a0"></div>
    <div class="abs" style="left:2237.5px;top:1198.5px;width:0;height:0;border-left:3.5px solid transparent;border-right:3.5px solid transparent;border-top:4px solid #a0a0a0"></div>
    <div class="abs" style="left:2188px;top:1212px;width:1px;height:18px;background:#e3e3e3"></div>
    <div class="abs" style="left:2210px;top:1212px;width:1px;height:18px;background:#e3e3e3"></div>
    <div class="abs" style="left:2232px;top:1212px;width:1px;height:18px;background:#e3e3e3"></div>
    <div class="abs" style="left:2196px;top:1217.5px;width:0;height:0;border-top:3.5px solid transparent;border-bottom:3.5px solid transparent;border-right:4px solid #a0a0a0"></div>
    <div class="abs" style="left:2219.5px;top:1217.5px;width:0;height:0;border-top:3.5px solid transparent;border-bottom:3.5px solid transparent;border-left:4px solid #a0a0a0"></div>
  </div>
</div>

<!-- ===== SIDE PANEL ===== -->
<div class="abs" id="panelshade" style="left:2249px;top:470px;width:12px;height:762px;background:linear-gradient(90deg,rgba(60,64,67,0.05),rgba(60,64,67,0))"></div>
<svg style="left:2249px;top:0" width="69" height="1280" viewBox="2249 0 69 1280">
 <!-- calendar -->
 <rect x="2275" y="102.8" width="26.3" height="26.5" rx="2.5" fill="#4285f4"/>
 <rect x="2295.6" y="102.8" width="5.7" height="5.4" fill="#1967d2"/>
 <path d="M2295.6 108 H2301.3 V123.8 H2295.6z" fill="#fbbc04"/>
 <path d="M2275 123.8 H2295.6 V129.3 H2277.5 A2.5 2.5 0 0 1 2275 126.8z" fill="#34a853"/>
 <path d="M2275 123.8 H2280.5 V129.3 H2277.5 A2.5 2.5 0 0 1 2275 126.8z" fill="#188038"/>
 <path d="M2295.6 123.8 H2301.3 L2295.6 129.3z" fill="#ea4335"/>
 <rect x="2280.5" y="108" width="15.1" height="15.8" fill="#fff"/>
 <text x="2288" y="121.3" font-family="Liberation Sans" font-size="12" font-weight="bold" fill="#4285f4" text-anchor="middle">31</text>
 <!-- keep -->
 <rect x="2275" y="182.1" width="27.1" height="27.2" rx="3" fill="#f2bc42"/>
 <circle cx="2288.6" cy="194.6" r="5.7" fill="#fff"/>
 <rect x="2285.4" y="201.2" width="6.4" height="2.2" fill="#fff"/>
 <!-- tasks -->
 <circle cx="2288.7" cy="276.2" r="9.6" fill="none" stroke="#4285f4" stroke-width="3.4"/>
 <path d="M2283.6 275.6 L2287.8 279.8 L2300.2 267.4" fill="none" stroke="#4285f4" stroke-width="3.2"/>
 <path d="M2296 266.5 L2301.5 265.2 L2300 270.8z" fill="#1967d2"/>
 <!-- contacts -->
 <circle cx="2288.7" cy="348" r="4.6" fill="#1e5bd6"/>
 <path d="M2280.5 366.5 V360 A5.8 5.8 0 0 1 2286.3 354.2 H2293.1 A5.8 5.8 0 0 1 2298.9 360 V366.5z" fill="#1e5bd6"/>
 <path d="M2278.6 366.5 V361 A5.5 5.5 0 0 1 2283 355.5 V366.5z" fill="#8ab4f8"/>
 <!-- maps -->
 <path d="M2289 447.2 C2287 441 2280.5 436.5 2280.5 431 A8.5 8.5 0 0 1 2297.5 431 C2297.5 436.5 2291 441 2289 447.2z" fill="#34a853"/>
 <path d="M2280.5 431 A8.5 8.5 0 0 1 2283 425 L2289 431z" fill="#ea4335"/>
 <path d="M2283 425 A8.5 8.5 0 0 1 2297.5 431 L2289 431z" fill="#4285f4"/>
 <path d="M2280.5 431 C2280.5 434 2282 436.5 2284 439 L2289 431z" fill="#fbbc04"/>
 <circle cx="2289" cy="431" r="2.8" fill="#fff"/>
 <!-- divider -->
 <rect x="2274.2" y="498" width="28.8" height="1.2" fill="#dadce0"/>
 <!-- asana -->
 <g fill="#e3786d"><circle cx="2288.7" cy="554.7" r="6.2"/><circle cx="2280.6" cy="569" r="6.2"/><circle cx="2296.6" cy="569" r="6.2"/></g>
 <!-- plus -->
 <path d="M2279.2 641.8 H2298.3 M2288.75 632 V651.6" stroke="#1f1f1f" stroke-width="2.2"/>
 <!-- chevron right -->
 <path d="M2284.6 1236.8 L2291.4 1243.4 L2284.6 1250" fill="none" stroke="#444746" stroke-width="2.2"/>
</svg>


<!-- ===== TAB BAR ===== -->
<div class="abs" style="left:180px;top:1232px;width:247px;height:48px;background:linear-gradient(#e3eaf7,#dae2f1)"></div>
<svg style="left:0;top:1230px" width="440" height="50" viewBox="0 1230 440 50">
 <path d="M70 1258.2 H84 M77 1251.2 V1265.2" stroke="#444746" stroke-width="2.2"/>
 <g fill="#444746"><rect x="124" y="1251" width="20" height="2"/><rect x="124" y="1257" width="20" height="2"/><rect x="124" y="1263" width="20" height="2"/></g>
 <path d="M398.4 1255.6 H409.4 L403.9 1261.2z" fill="#0b57d0"/>
</svg>
<div class="abs" style="left:198px;top:1247px;font-size:20px;-webkit-text-stroke:0.6px #0b57d0;letter-spacing:1.45px;color:#0b57d0;white-space:nowrap">E-E-A-T Checklist</div>


</body></html>
